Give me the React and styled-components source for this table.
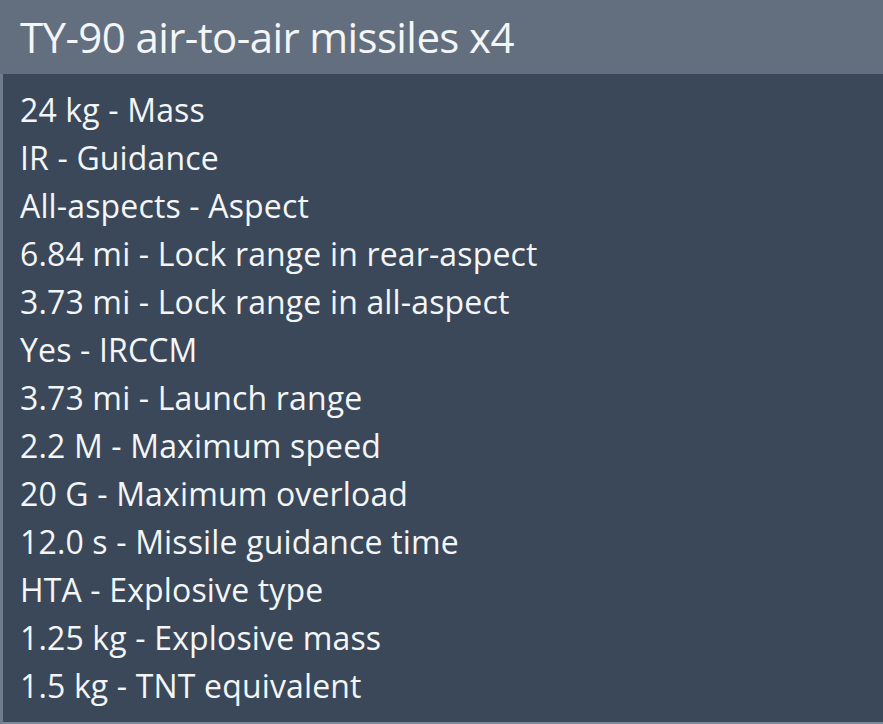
import React from "react";
import styled, { createGlobalStyle } from "styled-components";

const stats = [
  ["24 kg", "Mass"],
  ["IR", "Guidance"],
  ["All-aspects", "Aspect"],
  ["6.84 mi", "Lock range in rear-aspect"],
  ["3.73 mi", "Lock range in all-aspect"],
  ["Yes", "IRCCM"],
  ["3.73 mi", "Launch range"],
  ["2.2 M", "Maximum speed"],
  ["20 G", "Maximum overload"],
  ["12.0 s", "Missile guidance time"],
  ["HTA", "Explosive type"],
  ["1.25 kg", "Explosive mass"],
  ["1.5 kg", "TNT equivalent"],
];

const App = () => (
  <>
    <GlobalStyle />
    <Card>
      <Header>TY-90 air-to-air missiles x4</Header>
      <List>
        {stats.map(([value, label], i) => (
          <Row key={i}>
            {value} - {label}
          </Row>
        ))}
      </List>
    </Card>
  </>
);

const GlobalStyle = createGlobalStyle`
  html, body {
    margin: 0;
    padding: 0;
    background: #3a4859;
  }
`;

const Card = styled.div`
  width: 883px;
  height: 724px;
  box-sizing: border-box;
  border-left: 3px solid #6f7d8f;
  border-bottom: 2px solid #7a889a;
  background: #3a4859;
  font-family: "Open Sans", Lato, sans-serif;
  color: #f4f5f6;
  display: flex;
  flex-direction: column;
`;

const Header = styled.div`
  height: 74px;
  box-sizing: border-box;
  background: #636f7f;
  margin-left: -3px;
  padding: 0 0 2px 20px;
  display: flex;
  align-items: center;
  font-size: 42px;
  font-weight: 400;
  letter-spacing: -0.6px;
`;

const List = styled.div`
  padding: 12px 0 0 17px;
  display: flex;
  flex-direction: column;
`;

const Row = styled.div`
  font-size: 32px;
  line-height: 48px;
  letter-spacing: 0.15px;
  white-space: nowrap;
`;

export default App;
